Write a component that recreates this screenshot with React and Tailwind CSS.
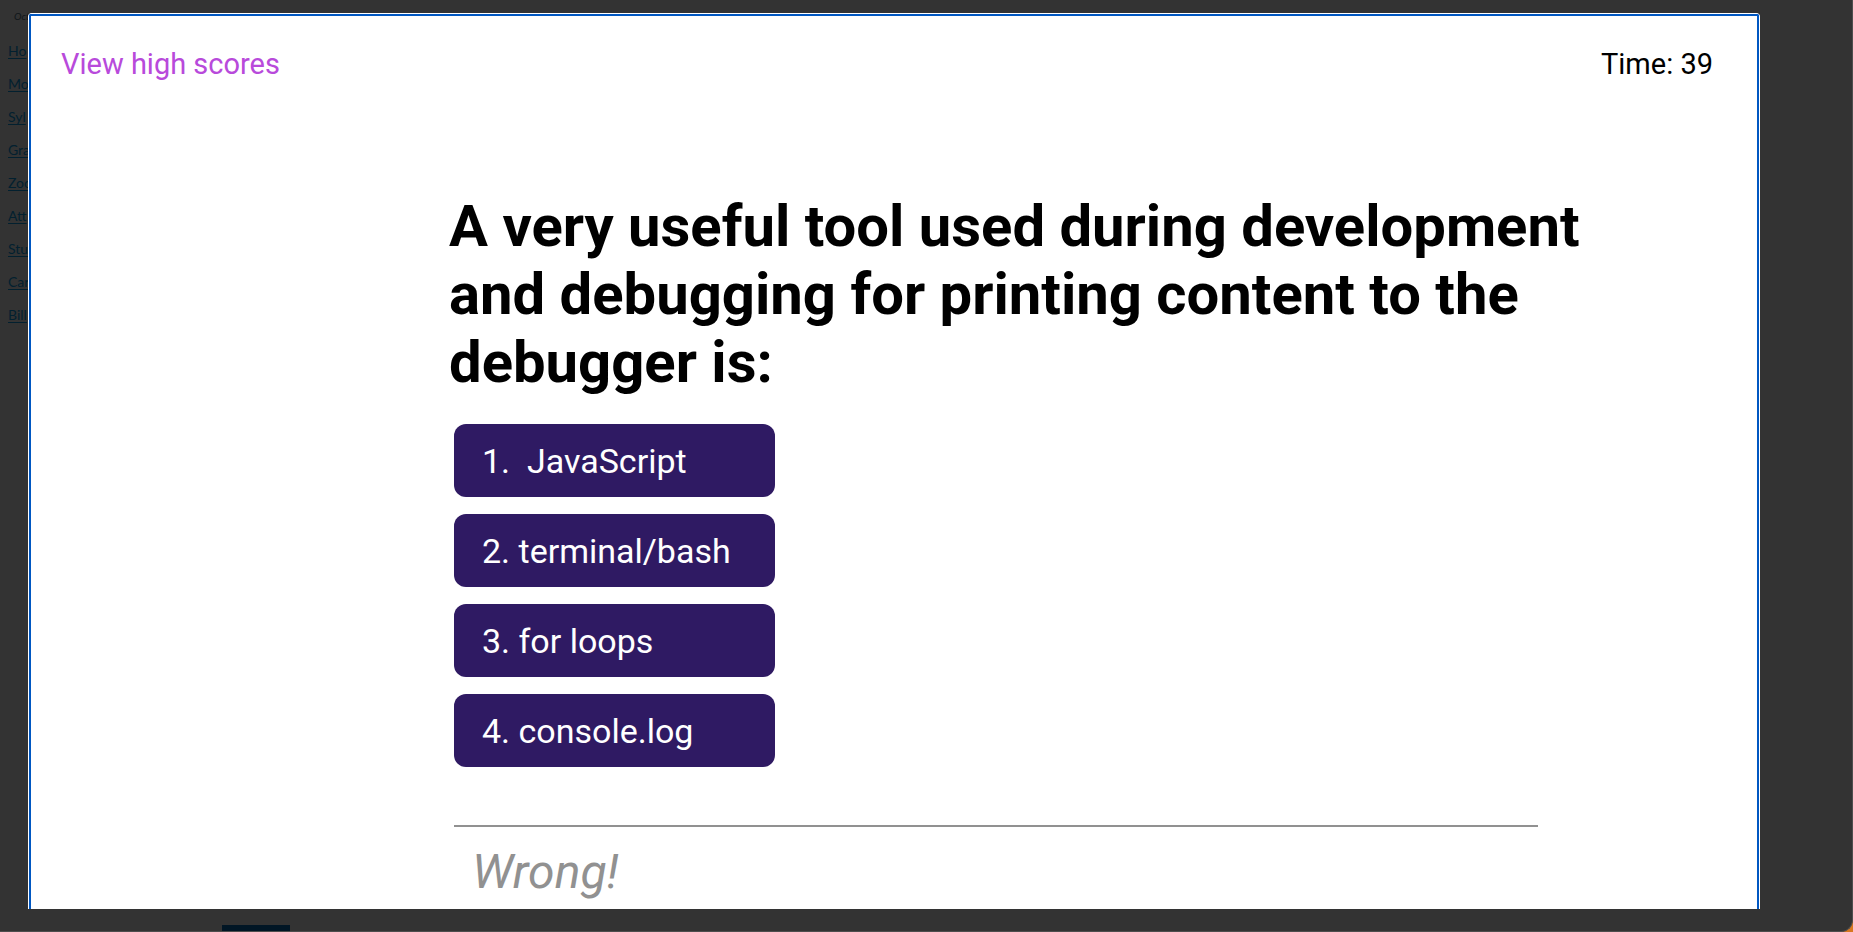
const courseLinks = ["Ho", "Mo", "Syl", "Gra", "Zoo", "Att", "Stu", "Car", "Bill"];

const answers = ["1.\u00a0 JavaScript", "2. terminal/bash", "3. for loops", "4. console.log"];

function CourseNav() {
  return (
    <nav aria-label="Course" className="col-start-1 row-start-1 pt-2 pl-2 font-['Lato',sans-serif] text-[#02202f]">
      <p className="pl-1.5 text-[10px] leading-4 text-[#10161a] italic">Oct</p>
      <ul className="pt-2.5">
        {courseLinks.map((label) => (
          <li key={label} className="h-[33px] text-sm leading-[34px]">
            <a href="#" className="underline underline-offset-2">{label}</a>
          </li>
        ))}
      </ul>
    </nav>
  );
}

function QuizDialog() {
  return (
    <section
      role="dialog"
      aria-label="Quiz"
      className="z-10 col-start-1 row-start-1 mt-[13px] mr-[92px] mb-[22px] ml-7 flex rounded-t-sm border border-b-0 border-white bg-white"
    >
      <div className="flex-1 rounded-t-xs border-2 border-b-0 border-[#0057c2] px-[30px] pt-7 font-['Roboto',sans-serif] text-black">
        <header className="flex justify-between pr-3.5 text-[29px] leading-10">
          <a href="#" className="text-[#b84adb]">View high scores</a>
          <p>Time: 39</p>
        </header>
        <main className="mr-12 ml-[388px] pt-[108px]">
          <h1 className="text-[58px] leading-[68px] font-bold">
            A very useful tool used during development and debugging for printing content to the debugger is:
          </h1>
          <div className="mt-7 mr-[141px] ml-[5px]">
            <ul className="flex flex-col gap-[17px]">
              {answers.map((answer) => (
                <li key={answer} className="flex">
                  <button type="button" className="h-[73px] w-[321px] rounded-xl bg-[#2f1a63] pl-7 text-left text-[34px] leading-10 text-white">
                    {answer}
                  </button>
                </li>
              ))}
            </ul>
            <hr className="mt-[58px] border-t-2 border-[#919191]" />
            <p className="pt-4 pl-[18px] text-[48px] leading-[58px] text-[#919191] italic">Wrong!</p>
          </div>
        </main>
      </div>
    </section>
  );
}

export default function App() {
  return (
    <div className="bg-[#d9771f]">
      <div className="relative grid min-h-screen overflow-hidden rounded-br-xl border-r border-b border-[#4e4e4e] bg-[#333333]">
        <CourseNav />
        <QuizDialog />
        <div className="absolute bottom-0 left-[222px] h-1.5 w-[68px] bg-[#011625]" />
      </div>
    </div>
  );
}
